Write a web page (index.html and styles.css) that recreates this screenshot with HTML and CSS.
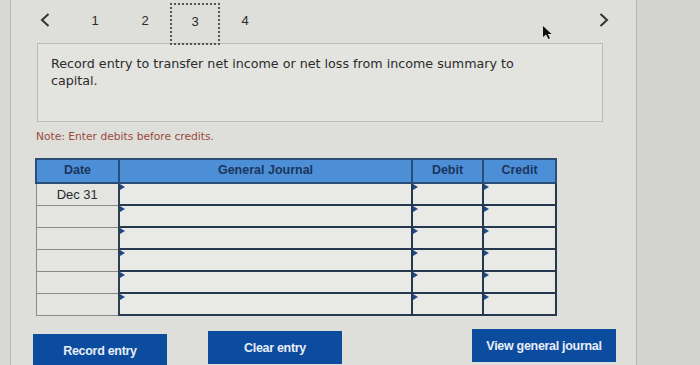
FILE: index.html
```html
<!DOCTYPE html>
<html>
<head>
<meta charset="utf-8">
<link rel="stylesheet" href="styles.css">
</head>
<body>
<div class="screen">
  <div class="panel">
    <nav class="tabs">
      <span class="tab arrow"><svg width="12" height="16" viewBox="0 0 12 16"><path d="M9.5 2 L3 8 L9.5 14" fill="none" stroke="#333" stroke-width="2"/></svg></span>
      <span class="tab">1</span>
      <span class="tab">2</span>
      <span class="tab current">3</span>
      <span class="tab">4</span>
      <span class="tab arrow next"><svg width="12" height="16" viewBox="0 0 12 16"><path d="M2.5 2 L9 8 L2.5 14" fill="none" stroke="#333" stroke-width="2"/></svg></span>
    </nav>
    <div class="prompt">Record entry to transfer net income or net loss from income summary to capital.</div>
    <p class="note">Note: Enter debits before credits.</p>
    <table class="journal">
      <thead>
        <tr><th class="c-date">Date</th><th class="c-gj">General Journal</th><th class="c-dr">Debit</th><th class="c-cr">Credit</th></tr>
      </thead>
      <tbody>
        <tr><td class="date">Dec 31</td><td class="in"></td><td class="in"></td><td class="in"></td></tr>
        <tr><td class="date"></td><td class="in"></td><td class="in"></td><td class="in"></td></tr>
        <tr><td class="date"></td><td class="in"></td><td class="in"></td><td class="in"></td></tr>
        <tr><td class="date"></td><td class="in"></td><td class="in"></td><td class="in"></td></tr>
        <tr><td class="date"></td><td class="in"></td><td class="in"></td><td class="in"></td></tr>
        <tr><td class="date"></td><td class="in"></td><td class="in"></td><td class="in"></td></tr>
      </tbody>
    </table>
    <div class="actions">
      <button class="btn b1">Record entry</button>
      <button class="btn b2">Clear entry</button>
      <button class="btn b3">View general journal</button>
    </div>
    <svg class="cursor" width="12" height="16" viewBox="0 0 12 16"><path d="M1 1 L1 12 L4 9.5 L6.5 14 L8 13.3 L5.8 9 L9.5 9 Z" fill="#111"/></svg>
  </div>
  <div class="edge"></div>
</div>
</body>
</html>
```

FILE: styles.css
```css
html, body {
  margin: 0;
  padding: 0;
}
body {
  width: 700px;
  height: 365px;
  overflow: hidden;
  background: #d6d6d2;
  font-family: "DejaVu Sans", Verdana, sans-serif;
}
.screen {
  display: flex;
  height: 365px;
  background: #d8d8d4;
}
.panel {
  position: relative;
  margin-left: 10px;
  width: 625px;
  border-left: 1px solid #b9b9b4;
  border-right: 1px solid #b4b4b0;
  background: #dededa;
}
.edge {
  flex: 1;
  background: #d3d3cf;
}
.tabs {
  display: flex;
  align-items: center;
  height: 43px;
  padding-left: 9px;
  box-sizing: border-box;
}
.tab {
  width: 50px;
  height: 41px;
  margin-top: 2px;
  display: flex;
  align-items: center;
  justify-content: center;
  font-family: "Liberation Sans", Arial, sans-serif;
  font-size: 13px;
  color: #2a2a2a;
  box-sizing: border-box;
  padding-bottom: 4px;
}
.tab.arrow {
  padding-bottom: 6px;
}
.tab.current {
  border: 2px dotted #555;
  position: relative;
  z-index: 2;
  height: 42px;
  margin-top: 4px;
}
.tab.next {
  margin-left: auto;
  width: 30px;
  margin-right: 17px;
}
.prompt {
  margin-left: 26px;
  width: 566px;
  height: 79px;
  box-sizing: border-box;
  border: 1px solid #bcbcb7;
  background: #e3e3df;
  padding: 11px 60px 0 13px;
  font-size: 12.7px;
  line-height: 17px;
  color: #2b2b2b;
}
.note {
  margin: 8px 0 0 25px;
  font-size: 10.7px;
  color: #9a4b3c;
  height: 14px;
}
.journal {
  margin: 14px 0 0 24px;
  border-collapse: collapse;
  table-layout: fixed;
  width: 520px;
  font-family: "Liberation Sans", Arial, sans-serif;
}
.journal th {
  background: #4d8fd7;
  color: #1b355e;
  font-size: 12.5px;
  font-weight: bold;
  height: 24px;
  padding: 0 0 3px 0;
  border: 2px solid #2a4d78;
  box-sizing: border-box;
}
.c-date { width: 83px; }
.c-gj { width: 293px; }
.c-dr { width: 71px; }
.c-cr { width: 73px; }
.journal td {
  height: 22px;
  padding: 0;
  box-sizing: border-box;
}
.journal td.date {
  background: #e4e4e0;
  border: 1px solid #8a8a88;
  border-right: 2px solid #2f3d4e;
  text-align: center;
  font-size: 13px;
  color: #2a2a2a;
  vertical-align: top;
  padding-top: 3px;
}
.journal td.in {
  position: relative;
  background: #e9e9e6;
  border: 2px solid #25384f;
}
.journal td.in::before {
  content: "";
  position: absolute;
  left: 0;
  top: 0;
  border-top: 3px solid transparent;
  border-bottom: 3px solid transparent;
  border-left: 5px solid #1f4a8a;
}
.actions {
  display: flex;
  margin: 15px 0 0 22px;
  align-items: flex-start;
}
.btn {
  height: 33px;
  background: #0c4c9e;
  color: #e8eef8;
  border: 0;
  font-family: "Liberation Sans", Arial, sans-serif;
  font-weight: bold;
  font-size: 12.5px;
  padding: 0;
  letter-spacing: -0.3px;
}
.b1 { width: 134px; margin-top: 3px; }
.b2 { width: 134px; margin-left: 41px; }
.b3 { width: 144px; margin-left: 130px; margin-top: -2px; }
.cursor {
  position: absolute;
  left: 531px;
  top: 25px;
}
```
